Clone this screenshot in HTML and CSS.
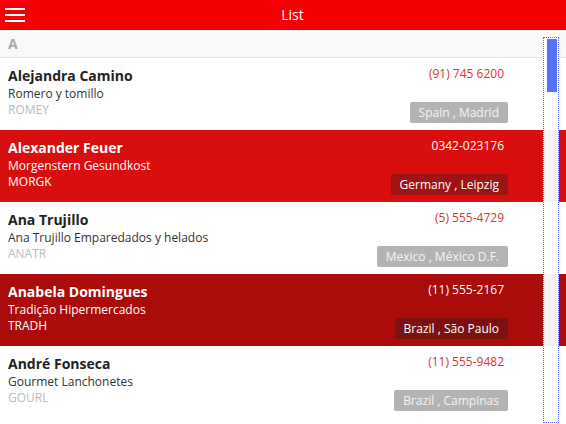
FILE: index.html
```html
<!DOCTYPE html>
<html>
<head>
<meta charset="utf-8">
<title>List</title>
<link rel="stylesheet" href="styles.css">
</head>
<body>
<div class="app">
  <header class="topbar">
    <button class="menu" aria-label="Menu">
      <span></span><span></span><span></span>
    </button>
    <div class="title">List</div>
  </header>
  <div class="list">
    <div class="group">A</div>
    <div class="item">
      <div class="left">
        <div class="name">Alejandra Camino</div>
        <div class="company">Romero y tomillo</div>
        <div class="code">ROMEY</div>
      </div>
      <div class="right">
        <div class="phone">(91) 745 6200</div>
        <div class="badge">Spain , Madrid</div>
      </div>
    </div>
    <div class="item sel">
      <div class="left">
        <div class="name">Alexander Feuer</div>
        <div class="company">Morgenstern Gesundkost</div>
        <div class="code">MORGK</div>
      </div>
      <div class="right">
        <div class="phone">0342-023176</div>
        <div class="badge">Germany , Leipzig</div>
      </div>
    </div>
    <div class="item">
      <div class="left">
        <div class="name">Ana Trujillo</div>
        <div class="company">Ana Trujillo Emparedados y helados</div>
        <div class="code">ANATR</div>
      </div>
      <div class="right">
        <div class="phone">(5) 555-4729</div>
        <div class="badge">Mexico , México D.F.</div>
      </div>
    </div>
    <div class="item sel dark">
      <div class="left">
        <div class="name">Anabela Domingues</div>
        <div class="company">Tradição Hipermercados</div>
        <div class="code">TRADH</div>
      </div>
      <div class="right">
        <div class="phone">(11) 555-2167</div>
        <div class="badge">Brazil , São Paulo</div>
      </div>
    </div>
    <div class="item">
      <div class="left">
        <div class="name">André Fonseca</div>
        <div class="company">Gourmet Lanchonetes</div>
        <div class="code">GOURL</div>
      </div>
      <div class="right">
        <div class="phone">(11) 555-9482</div>
        <div class="badge">Brazil , Campinas</div>
      </div>
    </div>
  </div>
  <div class="scrollbar"><div class="thumb"></div></div>
</div>
</body>
</html>
```
FILE: styles.css
```css
* { box-sizing: border-box; }
html, body {
  margin: 0;
  padding: 0;
  width: 566px;
  height: 424px;
  overflow: hidden;
  background: #fff;
  font-family: "Open Sans", "Noto Sans", sans-serif;
}
.app {
  position: relative;
  width: 566px;
  height: 424px;
  overflow: hidden;
}
.topbar {
  height: 30px;
  background: #f50000;
  display: flex;
  align-items: center;
  position: relative;
}
.menu {
  border: 0;
  background: transparent;
  padding: 0;
  margin-left: 5px;
  width: 20px;
  display: flex;
  flex-direction: column;
  gap: 4px;
}
.menu span {
  display: block;
  height: 2px;
  background: #fff;
}
.title {
  flex: 1;
  text-align: center;
  color: #fff;
  font-size: 14px;
  margin-right: 6px;
  line-height: 30px;
}
.group {
  height: 28px;
  background: #f9f9f9;
  border-bottom: 1px solid #e4e4e4;
  color: #aaa;
  font-weight: bold;
  font-size: 14px;
  padding-left: 8px;
  line-height: 27px;
}
.item {
  height: 72px;
  display: flex;
  justify-content: space-between;
  padding: 8px 58px 8px 8px;
  background: #fff;
}
.item.sel { background: #d90e0e; }
.item.sel.dark { background: #aa0b0b; }
.left { display: flex; flex-direction: column; }
.name {
  font-size: 14px;
  font-weight: bold;
  color: #222;
  line-height: 20px;
}
.company {
  font-size: 12px;
  color: #333;
  line-height: 16px;
}
.code {
  font-size: 12px;
  color: #bbb;
  line-height: 16px;
}
.right {
  display: flex;
  flex-direction: column;
  align-items: flex-end;
  justify-content: space-between;
}
.phone {
  font-size: 12px;
  color: #e03030;
  line-height: 16px;
  margin-right: 4px;
}
.badge {
  background: #b3b3b3;
  color: #f4f4f4;
  font-size: 12px;
  line-height: 21px;
  height: 21px;
  padding: 0 9px;
  border-radius: 2px;
  margin-bottom: -1px;
}
.sel .name, .sel .company, .sel .code, .sel .phone { color: #fff; }
.sel .badge { background: #9e1414; color: #fff; }
.sel.dark .badge { background: #7c1111; }
.scrollbar {
  position: absolute;
  left: 543px;
  top: 37px;
  width: 16px;
  height: 386px;
  border: 1px dotted #5a6cff;
  background: rgba(255,255,255,0.94);
}
.thumb {
  margin: 1px 0 0 3px;
  width: 10px;
  height: 53px;
  background: #5572ff;
}
```
